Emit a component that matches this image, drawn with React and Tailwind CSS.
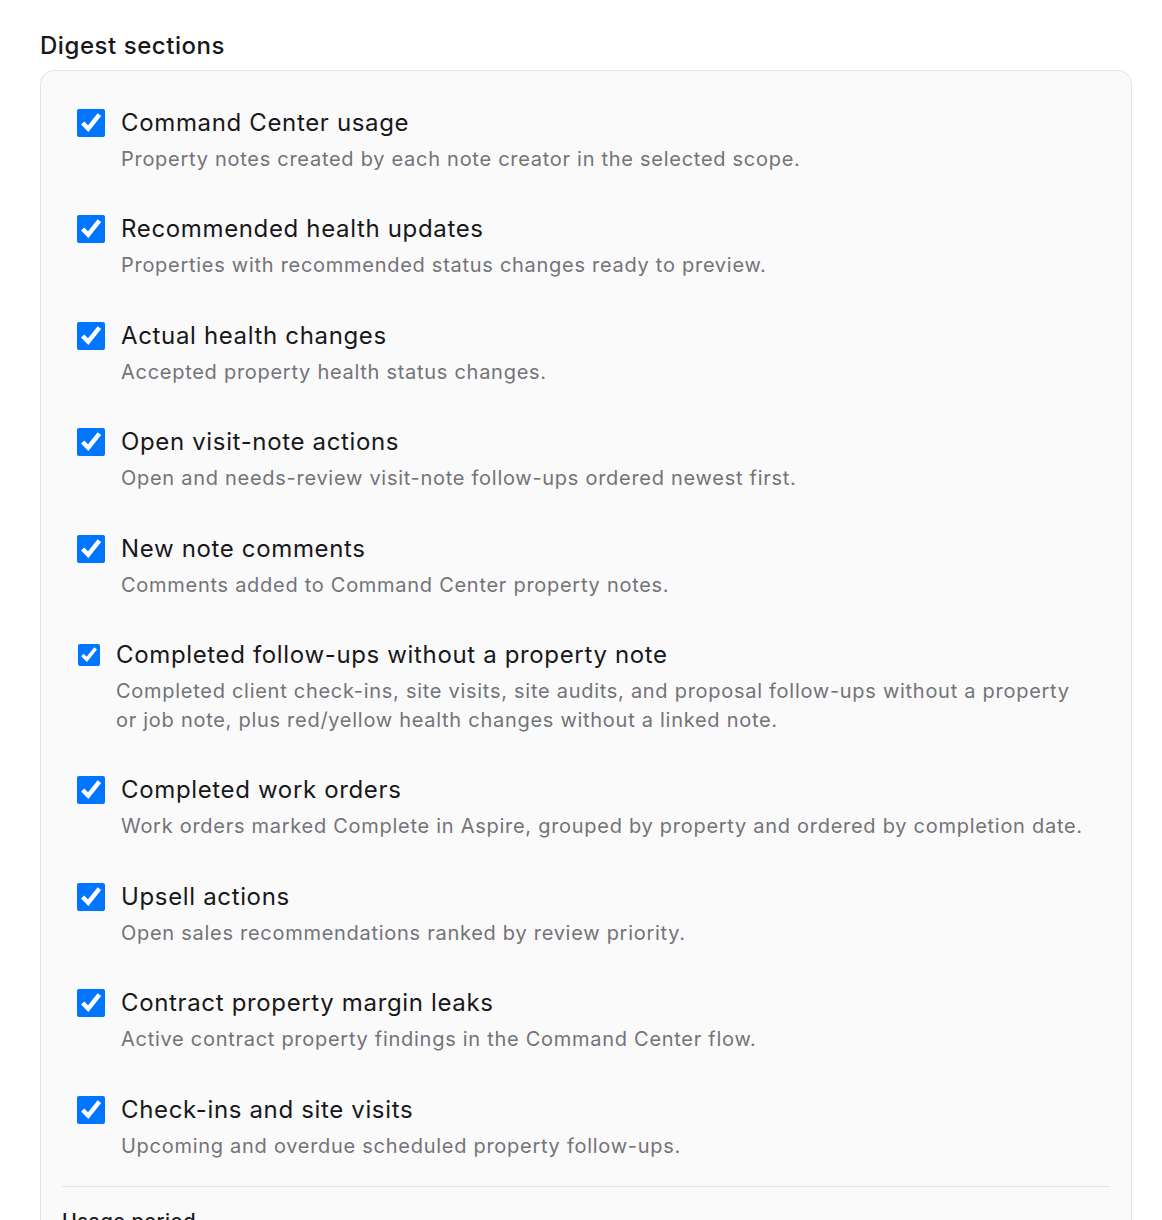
import React from 'react';

const sections = [
  {
    id: 'usage',
    title: 'Command Center usage',
    description: 'Property notes created by each note creator in the selected scope.',
  },
  {
    id: 'recommended',
    title: 'Recommended health updates',
    description: 'Properties with recommended status changes ready to preview.',
  },
  {
    id: 'actual',
    title: 'Actual health changes',
    description: 'Accepted property health status changes.',
  },
  {
    id: 'visitActions',
    title: 'Open visit-note actions',
    description: 'Open and needs-review visit-note follow-ups ordered newest first.',
  },
  {
    id: 'comments',
    title: 'New note comments',
    description: 'Comments added to Command Center property notes.',
  },
  {
    id: 'missingNotes',
    title: 'Completed follow-ups without a property note',
    description:
      'Completed client check-ins, site visits, site audits, and proposal follow-ups without a property or job note, plus red/yellow health changes without a linked note.',
    compact: true,
  },
  {
    id: 'workOrders',
    title: 'Completed work orders',
    description: 'Work orders marked Complete in Aspire, grouped by property and ordered by completion date.',
  },
  {
    id: 'upsell',
    title: 'Upsell actions',
    description: 'Open sales recommendations ranked by review priority.',
  },
  {
    id: 'marginLeaks',
    title: 'Contract property margin leaks',
    description: 'Active contract property findings in the Command Center flow.',
  },
  {
    id: 'checkIns',
    title: 'Check-ins and site visits',
    description: 'Upcoming and overdue scheduled property follow-ups.',
  },
];

const SectionToggle = ({ section }) => (
  <label className="flex items-start gap-4 cursor-pointer">
    <div className="h-8 flex items-center">
      <input
        type="checkbox"
        defaultChecked
        className={section.compact ? 'w-[22px] h-[22px] ml-px accent-[#0075ff]' : 'w-7 h-7 accent-[#0075ff]'}
      />
    </div>
    <div className="flex-1">
      <p className="text-[24px] leading-8 tracking-[0.65px] text-[#18181b]">{section.title}</p>
      <p className="mt-[6px] text-[20px] leading-[29px] tracking-[0.72px] text-[#737378]">{section.description}</p>
    </div>
  </label>
);

export default function App() {
  return (
    <div className="min-h-[1220px] bg-white pl-10 pr-[30px] pt-[30px] font-['Inter',sans-serif]">
      <h2 className="text-[24px] leading-8 tracking-[0.55px] font-medium text-[#18181b]">Digest sections</h2>
      <div className="mt-[8px] rounded-[14px] border border-[#e4e4e7] bg-[#fafafa] px-[21px] pt-[36px]">
        <div className="flex flex-col gap-[39.4px] px-[15px] pb-[25px]">
          {sections.map((s) => (
            <SectionToggle key={s.id} section={s} />
          ))}
        </div>
        <div className="border-t border-[#e4e4e7] pt-[20px]">
          <p className="text-[20px] leading-7 tracking-[0.5px] font-medium text-[#18181b]">Usage period</p>
        </div>
      </div>
    </div>
  );
}
